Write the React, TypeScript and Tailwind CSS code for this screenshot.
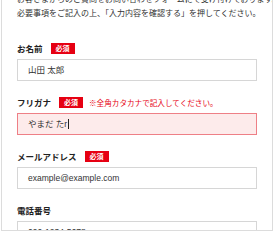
import React from "react";

const jp = { fontFamily: '"Noto Sans CJK JP", "Noto Sans", sans-serif' };
const mix = { fontFamily: '"Liberation Sans", "Noto Sans CJK JP", sans-serif' };

function Badge() {
  return (
    <span className="inline-flex items-center justify-center w-[24px] h-[11px] bg-[#e60012] text-white text-[7px] font-bold leading-none ml-[8px]">
      必須
    </span>
  );
}

function Label({ text, required = true, note }: { text: string; required?: boolean; note?: string }) {
  return (
    <div className="flex items-center h-[11px]">
      <span className="text-[8.5px] font-bold text-[#222] leading-none">{text}</span>
      {required && <Badge />}
      {note && <span className="ml-[6px] text-[7.6px] text-[#e60012] leading-none">{note}</span>}
    </div>
  );
}

function Input({ value, error, caret }: { value: string; error?: boolean; caret?: boolean }) {
  return (
    <div
      className={`mt-[5px] w-[240px] h-[22px] flex items-center pl-[10px] border ${
        error ? "border-[#ee7f86] bg-[#fdebeb]" : "border-[#d6d6d6] bg-white"
      }`}
    >
      <span className="text-[8.5px] text-[#333] leading-none" style={mix}>
        {value}
      </span>
      {caret && <span className="w-[1px] h-[10px] bg-[#222] ml-[0.5px]" />}
    </div>
  );
}

export default function App() {
  return (
    <div className="w-[275px] h-[232px] bg-white overflow-hidden" style={jp}>
      <div className="ml-[1px] w-[272px] h-[231px] border-x border-b border-[#dcdcdc] overflow-hidden pl-[15px]">
        <div className="-mt-[8px] text-[8px] leading-[14px] text-[#333] whitespace-nowrap">
          <div>お客さまからのご質問をお問い合わせフォームにて受け付けております。</div>
          <div>必要事項をご記入の上、「入力内容を確認する」を押してください。</div>
        </div>
        <div className="mt-[23px]">
          <Label text="お名前" />
          <Input value="山田 太郎" />
        </div>
        <div className="mt-[16px]">
          <Label text="フリガナ" note="※全角カタカナで記入してください。" />
          <Input value="やまだ たr" error caret />
        </div>
        <div className="mt-[16px]">
          <Label text="メールアドレス" />
          <Input value="example@example.com" />
        </div>
        <div className="mt-[16px]">
          <Label text="電話番号" required={false} />
          <Input value="090-1234-5678" />
        </div>
      </div>
    </div>
  );
}
